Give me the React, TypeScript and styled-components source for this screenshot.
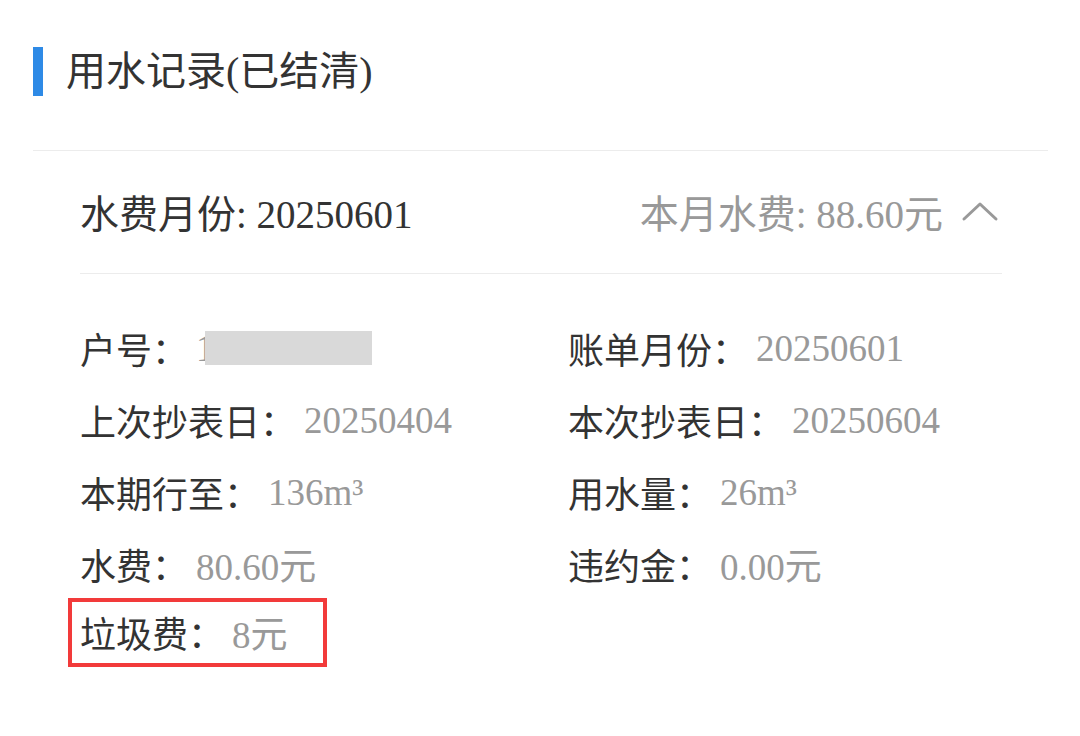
import styled, { createGlobalStyle } from 'styled-components'

const GlobalStyle = createGlobalStyle`
  html, body {
    margin: 0;
    padding: 0;
    background: #fff;
  }
  body {
    font-family: 'Liberation Serif', 'Noto Sans CJK SC', serif;
    color: #333;
  }
`

interface DetailItem {
  label: string
  value: string
  masked?: boolean
  highlight?: boolean
}

const details: DetailItem[] = [
  { label: '户号', value: '1', masked: true },
  { label: '账单月份', value: '20250601' },
  { label: '上次抄表日', value: '20250404' },
  { label: '本次抄表日', value: '20250604' },
  { label: '本期行至', value: '136m³' },
  { label: '用水量', value: '26m³' },
  { label: '水费', value: '80.60元' },
  { label: '违约金', value: '0.00元' },
  { label: '垃圾费', value: '8元', highlight: true },
]

const App = () => {
  return (
    <>
      <GlobalStyle />
      <Page>
        <TitleRow>
          <TitleMark />
          <Title>用水记录(已结清)</Title>
        </TitleRow>
        <Record>
          <RecordHeader>
            <MonthText>水费月份: 20250601</MonthText>
            <Summary>
              本月水费: 88.60元
              <svg width="38" height="22" viewBox="0 0 38 22" fill="none">
                <path
                  d="M3 19 L19 4 L35 19"
                  stroke="#999"
                  strokeWidth="3"
                  strokeLinecap="round"
                  strokeLinejoin="round"
                />
              </svg>
            </Summary>
          </RecordHeader>
          <DetailGrid>
            {details.map((d) => (
              <Cell key={d.label}>
                <Field $highlight={d.highlight}>
                  <Label>{d.label}：</Label>
                  <Value>
                    {d.value}
                    {d.masked && <Mask />}
                  </Value>
                </Field>
              </Cell>
            ))}
          </DetailGrid>
        </Record>
      </Page>
    </>
  )
}

export default App

const Page = styled.div`
  width: 1080px;
  padding: 0 32px 0 33px;
  box-sizing: border-box;
`

const TitleRow = styled.div`
  display: flex;
  align-items: center;
  gap: 23px;
  padding: 47px 0 54px;
  border-bottom: 1px solid #ececec;
`

const TitleMark = styled.div`
  width: 10px;
  height: 49px;
  background: #2e8ae6;
`

const Title = styled.h1`
  margin: 0;
  font-size: 40px;
  font-weight: normal;
  line-height: 49px;
  color: #333;
`

const Record = styled.div`
  padding: 0 46px 0 47px;
`

const RecordHeader = styled.div`
  height: 123px;
  display: flex;
  align-items: center;
  justify-content: space-between;
  border-bottom: 1px solid #ececec;
  padding-bottom: 2px;
  box-sizing: border-box;
`

const MonthText = styled.div`
  font-size: 39px;
  color: #333;
`

const Summary = styled.div`
  display: flex;
  align-items: center;
  gap: 18px;
  font-size: 39px;
  color: #999;
  margin-right: 3px;
`

const DetailGrid = styled.div`
  display: grid;
  grid-template-columns: 488px 1fr;
  grid-auto-rows: 72px;
  padding-top: 38px;
`

const Cell = styled.div`
  display: flex;
  align-items: center;
`

const Field = styled.div<{ $highlight?: boolean }>`
  display: flex;
  align-items: center;
  height: 61px;
  ${(p) =>
    p.$highlight &&
    `
    border: 4px solid #f23a3a;
    margin: -8px 0 0 -12px;
    padding: 0 35px 0 8px;
  `}
`

const Label = styled.span`
  font-size: 36px;
  color: #333;
`

const Value = styled.span`
  position: relative;
  margin-left: 8px;
  font-size: 37px;
  color: #999;
`

const Mask = styled.div`
  position: absolute;
  left: 9px;
  top: 50%;
  transform: translateY(-50%);
  width: 167px;
  height: 34px;
  background: #d9d9d9;
`
